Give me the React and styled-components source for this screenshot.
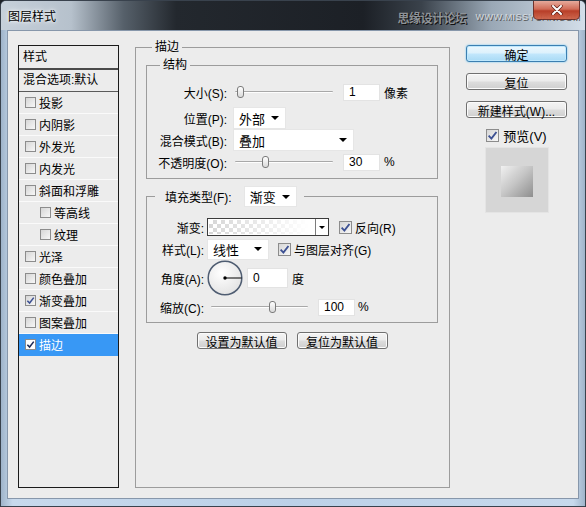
import React from "react";
import styled, { createGlobalStyle, css } from "styled-components";

const GlobalStyle = createGlobalStyle`
  html, body {
    margin: 0;
    padding: 0;
    background: #1d2228;
  }
  body {
    font-family: "Liberation Sans", "Noto Sans CJK SC", sans-serif;
    font-size: 12px;
    color: #000;
  }
`;

const Window = styled.div`
  width: 586px;
  height: 507px;
  box-sizing: border-box;
  display: flex;
  flex-direction: column;
  background: linear-gradient(
    to right,
    #9fb4ca,
    #c7d9ec 2%,
    #bcd1e8 50%,
    #c7d9ec 98%,
    #9fb4ca
  );
  border: 1px solid #39424d;
  border-radius: 6px 6px 0 0;
  padding: 0 6px 7px;
  overflow: hidden;
`;

const TitleBar = styled.div`
  position: relative;
  height: 29px;
  margin: 0 -6px;
  padding: 0 5px 0 7px;
  display: flex;
  align-items: center;
  background: linear-gradient(
    to right,
    #c6d0da 0%,
    #b6c1cc 12%,
    #56606a 21%,
    #23282e 30%,
    #1c2026 62%,
    #3a424b 72%,
    #9aa8b6 84%,
    #d3dee9 100%
  );
`;

const TitleText = styled.span`
  font-size: 12px;
  color: #000;
  text-shadow: 0 0 6px #fff, 0 0 3px #fff;
`;

const Watermark = styled.div`
  margin-left: auto;
  display: flex;
  align-items: center;
  gap: 9px;
  padding-top: 3px;
`;

const WatermarkName = styled.span`
  font-size: 12px;
  font-weight: bold;
  color: #8d9298;
  text-shadow: 1px 1px 0 #111, -1px 0 0 #333;
  letter-spacing: -0.5px;
`;

const WatermarkUrl = styled.span`
  font-size: 9px;
  color: #d3d9df;
  text-shadow: 1px 1px 0 #555;
  letter-spacing: 0.4px;
`;

const CloseButton = styled.div`
  position: absolute;
  top: 0;
  right: 5px;
  width: 47px;
  height: 19px;
  box-sizing: border-box;
  border: 1px solid #6b2a22;
  border-top: none;
  border-radius: 0 0 5px 5px;
  background: linear-gradient(#e9a898, #d2664f 45%, #b8351d 55%, #cf6247);
  display: flex;
  align-items: center;
  justify-content: center;
  opacity: 0.94;
`;

const Client = styled.div`
  flex: 1;
  background: #ececec;
  border: 1px solid #8797ab;
  display: grid;
  grid-template-columns: 101px 315px 101px;
  column-gap: 16px;
  padding: 14px 0 10px 10px;
`;

/* ---------- left list ---------- */

const StyleList = styled.div`
  border: 1px solid #1b1b1b;
  display: flex;
  flex-direction: column;
`;

const ListHeader = styled.div`
  height: 22px;
  line-height: 22px;
  padding-left: 4px;
  border-bottom: 2px solid #4a4a4a;
`;

const ListBlend = styled.div`
  height: 21px;
  line-height: 21px;
  padding-left: 4px;
  border-bottom: 1px solid #5a5a5a;
`;

const ListRow = styled.div`
  height: 21px;
  border-bottom: 1px solid #fafafa;
  display: flex;
  align-items: center;
  gap: 3px;
  padding-left: ${(p) => (p.$indent ? 21 : 6)}px;
  ${(p) =>
    p.$selected &&
    css`
      background: #3898f5;
      color: #fff;
      border-bottom-color: #3898f5;
    `}
`;

const Box = styled.span`
  flex: none;
  width: ${(p) => p.$size}px;
  height: ${(p) => p.$size}px;
  box-sizing: border-box;
  border: 1px solid #8c8c8c;
  background: ${(p) =>
    p.$white ? "#fff" : "linear-gradient(135deg, #d6d6d6, #f7f7f7)"};
  display: inline-flex;
  align-items: center;
  justify-content: center;
`;

function CheckBox({ checked, size = 11, white }) {
  return (
    <Box $size={size} $white={white}>
      {checked && (
        <svg width={size - 2} height={size - 2} viewBox="0 0 10 10">
          <path
            d="M1.5 5.2 L4 7.8 L8.6 1.8"
            fill="none"
            stroke={white ? "#1e2a55" : "#3d5193"}
            strokeWidth="1.7"
          />
        </svg>
      )}
    </Box>
  );
}

/* ---------- middle panel ---------- */

const OuterGroup = styled.fieldset`
  margin: -4px 0 0;
  min-width: 0;
  border: 1px solid #9c9c9c;
  padding: 0 11px 0 10px;
  display: flex;
  flex-direction: column;
`;

const Legend = styled.legend`
  padding: 0 3px;
  margin-left: ${(p) => p.$offset}px;
  line-height: ${(p) => p.$lh || 13}px;
`;

const InnerGroup = styled.fieldset`
  margin: ${(p) => p.$top}px 0 0;
  min-width: 0;
  border: 1px solid #9c9c9c;
  padding: 0;
`;

const FillLegend = styled.legend`
  margin-left: 8px;
  padding: 0 7px 0 10px;
  display: flex;
  align-items: center;
  gap: 12px;
`;

const FormGrid = styled.div`
  display: grid;
  grid-template-columns: ${(p) => p.$labelWidth}px auto;
  grid-template-rows: ${(p) => p.$rows};
  column-gap: ${(p) => p.$gap}px;
  align-items: center;
  padding: ${(p) => p.$pad};
`;

const Label = styled.span`
  text-align: right;
  white-space: nowrap;
`;

const Controls = styled.div`
  display: flex;
  align-items: center;
`;

const Slider = styled.div`
  position: relative;
  width: ${(p) => p.$width}px;
  height: 14px;
  margin-left: ${(p) => p.$ml}px;
  margin-right: ${(p) => p.$mr}px;
  display: flex;
  align-items: center;
`;

const SliderTrack = styled.div`
  flex: 1;
  height: 1px;
  background: #a8a8a8;
  border-bottom: 1px solid #fdfdfd;
  border-radius: 1px;
`;

const SliderThumb = styled.div`
  position: absolute;
  top: 1px;
  width: 7px;
  height: 12px;
  box-sizing: border-box;
  border: 1px solid #7b7b7b;
  border-radius: 3px;
  background: linear-gradient(#ffffff, #d9d9d9);
`;

const NumberBox = styled.div`
  width: ${(p) => p.$width}px;
  height: ${(p) => p.$height || 17}px;
  box-sizing: border-box;
  background: #fff;
  border: 1px solid #e3e3e3;
  padding-left: 5px;
  display: flex;
  align-items: center;
  margin-right: ${(p) => p.$mr || 4}px;
`;

const Select = styled.div`
  width: ${(p) => p.$width}px;
  height: ${(p) => p.$height || 22}px;
  box-sizing: border-box;
  background: #fff;
  border: 1px solid #e6e6e6;
  padding: 0 6px 0 5px;
  display: flex;
  align-items: center;
  justify-content: space-between;
  font-size: 13px;
`;

const Caret = styled.span`
  width: 0;
  height: 0;
  border-left: 4px solid transparent;
  border-right: 4px solid transparent;
  border-top: 4px solid #000;
`;

const GradientPicker = styled.div`
  width: 122px;
  height: 18px;
  box-sizing: border-box;
  border: 1px solid #3b3b3b;
  background: #fff;
  display: flex;
  margin-right: 10px;
`;

const GradientSwatch = styled.div`
  flex: 1;
  margin: 1px;
  background: linear-gradient(to right, rgba(255, 255, 255, 0.15), #fff 95%),
    repeating-conic-gradient(#cfcfcf 0 25%, #fff 0 50%) 0 0 / 8px 8px;
`;

const GradientArrow = styled.div`
  width: 12px;
  border-left: 1px solid #7c7c7c;
  display: flex;
  align-items: center;
  justify-content: center;
`;

const SmallCaret = styled(Caret)`
  border-left-width: 3px;
  border-right-width: 3px;
  border-top-width: 3px;
`;

const CheckLabel = styled.label`
  display: flex;
  align-items: center;
  gap: 3px;
  margin-left: ${(p) => p.$ml || 0}px;
`;

const Unit = styled.span`
  white-space: nowrap;
`;

const ButtonRow = styled.div`
  display: flex;
  justify-content: center;
  gap: 10px;
  margin-top: 9px;
`;

const PushButton = styled.button`
  width: ${(p) => p.$width}px;
  height: ${(p) => p.$height || 17}px;
  box-sizing: border-box;
  padding: 0;
  font-family: inherit;
  font-size: 12px;
  color: #000;
  border: 1px solid #707070;
  border-radius: 3px;
  background: linear-gradient(#f4f4f4 0%, #ebebeb 48%, #dddddd 52%, #cfcfcf 100%);
  box-shadow: inset 0 0 0 1px #fbfbfb;
  ${(p) =>
    p.$primary &&
    css`
      border-color: #3c7fb1;
      background: linear-gradient(#ecf7fd 0%, #dcf1fc 48%, #c2e7fc 52%, #a9daf5 100%);
      box-shadow: inset 0 0 0 1px #bfe8fd, 0 0 2px #5cc1f7;
    `}
`;

/* ---------- right column ---------- */

const SideColumn = styled.div`
  display: flex;
  flex-direction: column;
  align-items: center;
  gap: 11px;
`;

const PreviewToggle = styled.label`
  display: flex;
  align-items: center;
  gap: 4px;
  height: 14px;
  margin-top: -1px;
  font-size: 13px;
`;

const PreviewBox = styled.div`
  width: 64px;
  height: 66px;
  box-sizing: border-box;
  margin-top: -6px;
  background: #d6d6d6;
  border: 1px solid #e4e4e4;
  padding: 18px 0 0 15px;
`;

const PreviewSwatch = styled.div`
  width: 32px;
  height: 31px;
  background: linear-gradient(135deg, #f1f1f1 0%, #c4c4c4 50%, #8e8e8e 100%);
`;

const layers = [
  { name: "投影" },
  { name: "内阴影" },
  { name: "外发光" },
  { name: "内发光" },
  { name: "斜面和浮雕" },
  { name: "等高线", indent: true },
  { name: "纹理", indent: true },
  { name: "光泽" },
  { name: "颜色叠加" },
  { name: "渐变叠加", checked: true },
  { name: "图案叠加" },
  { name: "描边", checked: true, selected: true },
];

function RangeSlider({ width, value, ml = 0, mr = 10 }) {
  return (
    <Slider $width={width} $ml={ml} $mr={mr}>
      <SliderTrack />
      <SliderThumb style={{ left: Math.round((width - 7) * value) }} />
    </Slider>
  );
}

function AngleDial() {
  return (
    <svg width="36" height="36" viewBox="0 0 36 36" style={{ marginRight: 4 }}>
      <defs>
        <radialGradient id="dialFill" cx="40%" cy="35%" r="70%">
          <stop offset="0%" stopColor="#ffffff" />
          <stop offset="100%" stopColor="#e2e2e2" />
        </radialGradient>
      </defs>
      <circle cx="18" cy="18" r="16.8" fill="url(#dialFill)" stroke="#4f5d72" strokeWidth="1.5" />
      <line x1="18" y1="18" x2="34.5" y2="18" stroke="#000" strokeWidth="1" />
      <circle cx="18" cy="18" r="1.7" fill="#000" />
    </svg>
  );
}

function CloseGlyph() {
  return (
    <svg width="12" height="10" viewBox="0 0 12 10">
      <path d="M2 1 L10 9 M10 1 L2 9" stroke="#5a1409" strokeWidth="3.4" strokeLinecap="round" />
      <path d="M2 1 L10 9 M10 1 L2 9" stroke="#fff" strokeWidth="2" strokeLinecap="round" />
    </svg>
  );
}

export default function App() {
  return (
    <>
      <GlobalStyle />
      <Window>
        <TitleBar>
          <TitleText>图层样式</TitleText>
          <Watermark>
            <WatermarkName>思缘设计论坛</WatermarkName>
            <WatermarkUrl>WWW.MISSYUAN.COM</WatermarkUrl>
          </Watermark>
          <CloseButton>
            <CloseGlyph />
          </CloseButton>
        </TitleBar>

        <Client>
          <StyleList>
            <ListHeader>样式</ListHeader>
            <ListBlend>混合选项:默认</ListBlend>
            {layers.map((l) => (
              <ListRow key={l.name} $indent={l.indent} $selected={l.selected}>
                <CheckBox checked={l.checked} white={l.selected} />
                {l.name}
              </ListRow>
            ))}
          </StyleList>

          <OuterGroup>
            <Legend $offset={6}>描边</Legend>

            <InnerGroup $top={4}>
              <Legend $offset={13} $lh={14}>结构</Legend>
              <FormGrid $labelWidth={80} $gap={6} $rows="30px 22px 22px 22px" $pad="5px 0 5px 0">
                <Label>大小(S):</Label>
                <Controls>
                  <RangeSlider width={98} value={0.02} ml={2} />
                  <NumberBox $width={37}>1</NumberBox>
                  <Unit>像素</Unit>
                </Controls>

                <Label>位置(P):</Label>
                <Controls>
                  <Select $width={53}>
                    外部
                    <Caret />
                  </Select>
                </Controls>

                <Label>混合模式(B):</Label>
                <Controls>
                  <Select $width={121}>
                    叠加
                    <Caret />
                  </Select>
                </Controls>

                <Label>不透明度(O):</Label>
                <Controls>
                  <RangeSlider width={98} value={0.3} ml={2} />
                  <NumberBox $width={37}>30</NumberBox>
                  <Unit>%</Unit>
                </Controls>
              </FormGrid>
            </InnerGroup>

            <InnerGroup $top={7}>
              <FillLegend>
                <span>填充类型(F):</span>
                <Select $width={53} $height={21}>
                  渐变
                  <Caret />
                </Select>
              </FillLegend>
              <FormGrid $labelWidth={47} $gap={3} $rows="22px 22px 36px 22px" $pad="9px 0 4px 10px">
                <Label>渐变:</Label>
                <Controls>
                  <GradientPicker>
                    <GradientSwatch />
                    <GradientArrow>
                      <SmallCaret />
                    </GradientArrow>
                  </GradientPicker>
                  <CheckLabel>
                    <CheckBox checked size={13} />
                    反向(R)
                  </CheckLabel>
                </Controls>

                <Label>样式(L):</Label>
                <Controls>
                  <Select $width={62} $height={21}>
                    线性
                    <Caret />
                  </Select>
                  <CheckLabel $ml={9}>
                    <CheckBox checked size={13} />
                    与图层对齐(G)
                  </CheckLabel>
                </Controls>

                <Label>角度(A):</Label>
                <Controls>
                  <AngleDial />
                  <NumberBox $width={41} $height={20}>0</NumberBox>
                  <Unit>度</Unit>
                </Controls>

                <Label>缩放(C):</Label>
                <Controls>
                  <RangeSlider width={97} value={0.64} ml={4} />
                  <NumberBox $width={37} $mr={3}>100</NumberBox>
                  <Unit>%</Unit>
                </Controls>
              </FormGrid>
            </InnerGroup>

            <ButtonRow>
              <PushButton $width={90}>设置为默认值</PushButton>
              <PushButton $width={91}>复位为默认值</PushButton>
            </ButtonRow>
          </OuterGroup>

          <SideColumn>
            <PushButton $width={101} $primary>确定</PushButton>
            <PushButton $width={101}>复位</PushButton>
            <PushButton $width={101}>新建样式(W)...</PushButton>
            <PreviewToggle>
              <CheckBox checked size={13} />
              预览(V)
            </PreviewToggle>
            <PreviewBox>
              <PreviewSwatch />
            </PreviewBox>
          </SideColumn>
        </Client>
      </Window>
    </>
  );
}
